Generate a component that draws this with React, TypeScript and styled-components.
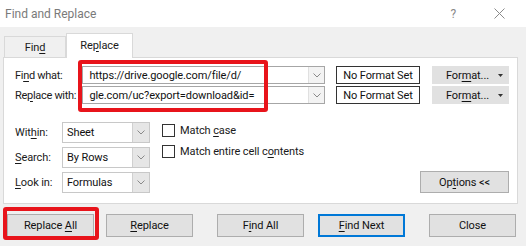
import styled, { createGlobalStyle } from "styled-components";

const GlobalStyle = createGlobalStyle`
  html, body {
    margin: 0;
    padding: 0;
    background: #f0f0f0;
  }
  body {
    font-family: Roboto, "Open Sans", sans-serif;
    font-size: 11px;
    letter-spacing: -0.1px;
    color: #1a1a1a;
  }
  * {
    box-sizing: border-box;
  }
`;

const Chevron = () => (
  <svg width="8" height="5" viewBox="0 0 8 5" fill="none">
    <path d="M0.5 0.5 L4 4 L7.5 0.5" stroke="#8a8a8a" strokeWidth="1" />
  </svg>
);

const CloseIcon = () => (
  <svg width="11" height="11" viewBox="0 0 11 11" fill="none">
    <path d="M0.5 0.5 L10.5 10.5 M10.5 0.5 L0.5 10.5" stroke="#8a8a8a" strokeWidth="1" />
  </svg>
);

const Caret = () => (
  <svg width="5" height="3" viewBox="0 0 5 3">
    <path d="M0 0 L5 0 L2.5 3 Z" fill="#333" />
  </svg>
);

const App = () => {
  return (
    <>
      <GlobalStyle />
      <Window>
        <TitleBar>
          <Title>Find and Replace</Title>
          <TitleActions>
            <Help>?</Help>
            <CloseIcon />
          </TitleActions>
        </TitleBar>

        <TabStrip>
          <Tab>
            <span>
              Fin<U>d</U>
            </span>
          </Tab>
          <Tab $active>
            <span>
              Re<U>p</U>lace
            </span>
          </Tab>
        </TabStrip>

        <Panel>
          <FieldRow>
            <FieldLabel>
              Fi<U>n</U>d what:
            </FieldLabel>
            <Combo>
              <ComboText>https://drive.google.com/file/d/</ComboText>
              <ComboArrow>
                <Chevron />
              </ComboArrow>
            </Combo>
            <FormatPreview>No Format Set</FormatPreview>
            <FormatButton>
              <span>
                For<U>m</U>at...
              </span>
              <Caret />
            </FormatButton>
          </FieldRow>
          <FieldRow>
            <FieldLabel>
              Re<U>p</U>lace with:
            </FieldLabel>
            <Combo>
              <ComboText>gle.com/uc?export=download&amp;id=</ComboText>
              <ComboArrow>
                <Chevron />
              </ComboArrow>
            </Combo>
            <FormatPreview>No Format Set</FormatPreview>
            <FormatButton>
              <span>
                For<U>m</U>at...
              </span>
              <Caret />
            </FormatButton>
          </FieldRow>

          <OptionsArea>
            <SelectGrid>
              <SmallLabel>
                Wit<U>h</U>in:
              </SmallLabel>
              <Select>
                <SelectText>Sheet</SelectText>
                <SelectArrow>
                  <Chevron />
                </SelectArrow>
              </Select>
              <SmallLabel>
                <U>S</U>earch:
              </SmallLabel>
              <Select>
                <SelectText>By Rows</SelectText>
                <SelectArrow>
                  <Chevron />
                </SelectArrow>
              </Select>
              <SmallLabel>
                <U>L</U>ook in:
              </SmallLabel>
              <Select>
                <SelectText>Formulas</SelectText>
                <SelectArrow>
                  <Chevron />
                </SelectArrow>
              </Select>
            </SelectGrid>

            <Checks>
              <CheckRow>
                <CheckBox />
                <span>
                  Match <U>c</U>ase
                </span>
              </CheckRow>
              <CheckRow>
                <CheckBox />
                <span>
                  Match entire cell c<U>o</U>ntents
                </span>
              </CheckRow>
            </Checks>

            <OptionsButton>
              <span>
                Op<U>t</U>ions &lt;&lt;
              </span>
            </OptionsButton>
          </OptionsArea>
        </Panel>

        <ButtonBar>
          <DialogButton $gap={0}>
            <span>
              Replace <U>A</U>ll
            </span>
          </DialogButton>
          <DialogButton $gap={12}>
            <span>
              <U>R</U>eplace
            </span>
          </DialogButton>
          <DialogButton $gap={24}>
            <span>
              F<U>i</U>nd All
            </span>
          </DialogButton>
          <DialogButton $gap={14} $default>
            <span>
              <U>F</U>ind Next
            </span>
          </DialogButton>
          <DialogButton $gap={24}>
            <span>Close</span>
          </DialogButton>
        </ButtonBar>

        <Highlight $x={78} $y={60} $w={190} $h={52} />
        <Highlight $x={3} $y={207} $w={96} $h={33} />
      </Window>
    </>
  );
};

const Window = styled.div`
  position: relative;
  width: 526px;
  height: 246px;
  overflow: hidden;
  background: #f0f0f0;
  display: flex;
  flex-direction: column;
`;

const TitleBar = styled.div`
  height: 27px;
  background: #fff;
  display: flex;
  align-items: center;
  padding-left: 5px;
  flex-shrink: 0;
`;

const Title = styled.div`
  color: #7a7a7a;
  font-size: 12px;
  letter-spacing: 0;
`;

const TitleActions = styled.div`
  margin-left: auto;
  margin-right: 21px;
  display: flex;
  align-items: center;
  gap: 38px;
`;

const Help = styled.span`
  color: #8a8a8a;
  font-size: 12px;
`;

const TabStrip = styled.div`
  height: 30px;
  display: flex;
  align-items: flex-end;
  padding-left: 4px;
  flex-shrink: 0;
`;

const Tab = styled.div<{ $active?: boolean }>`
  display: flex;
  align-items: center;
  justify-content: center;
  width: ${(p) => (p.$active ? "67px" : "62px")};
  height: ${(p) => (p.$active ? "25px" : "21px")};
  background: ${(p) => (p.$active ? "#fff" : "#f0f0f0")};
  border: 1px solid #d9d9d9;
  border-bottom: none;
  margin-bottom: ${(p) => (p.$active ? "-1px" : "0")};
  padding-bottom: ${(p) => (p.$active ? "2px" : "0")};
  position: relative;
  z-index: ${(p) => (p.$active ? 1 : 0)};
  color: #1a1a1a;
`;

const U = styled.span`
  text-decoration: underline;
  text-underline-offset: 2px;
`;

const Panel = styled.div`
  margin-left: 3px;
  width: 515px;
  height: 147px;
  background: #fff;
  border: 1px solid #d9d9d9;
  padding: 8px 8px 0 11px;
  display: flex;
  flex-direction: column;
  gap: 2px;
  flex-shrink: 0;
`;

const FieldRow = styled.div`
  display: flex;
  align-items: center;
  height: 18px;
`;

const FieldLabel = styled.div`
  width: 68px;
  white-space: nowrap;
  letter-spacing: -0.3px;
  color: #1a1a1a;
`;

const Combo = styled.div`
  width: 245px;
  height: 18px;
  display: flex;
  border: 1px solid #a6a6a6;
`;

const ComboText = styled.div`
  flex: 1;
  padding-left: 6px;
  display: flex;
  align-items: center;
  white-space: nowrap;
  overflow: hidden;
  color: #111;
`;

const ComboArrow = styled.div`
  width: 16px;
  display: flex;
  align-items: center;
  justify-content: center;
  background: #f3f3f3;
  border-left: 1px solid #e0e0e0;
`;

const FormatPreview = styled.div`
  margin-left: 11px;
  width: 84px;
  height: 18px;
  border: 1px solid #333;
  display: flex;
  align-items: center;
  justify-content: center;
  white-space: nowrap;
  color: #111;
`;

const FormatButton = styled.div`
  margin-left: 12px;
  width: 78px;
  height: 18px;
  background: #e1e1e1;
  border: 1px solid #e1e1e1;
  display: flex;
  align-items: center;
  justify-content: flex-end;
  gap: 9px;
  padding-right: 5px;
  white-space: nowrap;
  color: #111;
`;

const OptionsArea = styled.div`
  margin-top: 16px;
  display: flex;
  align-items: flex-start;
`;

const SelectGrid = styled.div`
  display: grid;
  grid-template-columns: 47px 88px;
  grid-auto-rows: 21px;
  row-gap: 4px;
  align-items: center;
`;

const SmallLabel = styled.div`
  white-space: nowrap;
  color: #1a1a1a;
`;

const Select = styled.div`
  height: 21px;
  display: flex;
  border: 1px solid #c8c8c8;
`;

const SelectText = styled.div`
  flex: 1;
  padding-left: 4px;
  display: flex;
  align-items: center;
  color: #111;
`;

const SelectArrow = styled.div`
  width: 17px;
  display: flex;
  align-items: center;
  justify-content: center;
  background: #e6e6e6;
  border-left: 1px solid #d0d0d0;
`;

const Checks = styled.div`
  margin-left: 12px;
  padding-top: 2px;
  display: flex;
  flex-direction: column;
  gap: 8px;
`;

const CheckRow = styled.div`
  display: flex;
  align-items: center;
  gap: 5px;
  height: 13px;
  white-space: nowrap;
  color: #1a1a1a;
`;

const CheckBox = styled.span`
  width: 13px;
  height: 13px;
  border: 1px solid #333;
  background: #fff;
  flex-shrink: 0;
`;

const OptionsButton = styled.div`
  margin-left: auto;
  margin-top: 49px;
  width: 89px;
  height: 22px;
  background: #e1e1e1;
  border: 1px solid #adadad;
  display: flex;
  align-items: center;
  justify-content: center;
  white-space: nowrap;
  color: #111;
`;

const ButtonBar = styled.div`
  margin-top: 10px;
  padding-left: 7px;
  display: flex;
`;

const DialogButton = styled.div<{ $gap: number; $default?: boolean }>`
  margin-left: ${(p) => p.$gap}px;
  width: 87px;
  height: 23px;
  background: #e1e1e1;
  border: 1px solid ${(p) => (p.$default ? "#0078d7" : "#adadad")};
  box-shadow: ${(p) => (p.$default ? "inset 0 0 0 1px #0078d7" : "none")};
  display: flex;
  align-items: center;
  justify-content: center;
  white-space: nowrap;
  color: #111;
`;

const Highlight = styled.div<{ $x: number; $y: number; $w: number; $h: number }>`
  position: absolute;
  left: ${(p) => p.$x}px;
  top: ${(p) => p.$y}px;
  width: ${(p) => p.$w}px;
  height: ${(p) => p.$h}px;
  border: 4px solid #e8141b;
  border-radius: 3px;
  pointer-events: none;
`;

export default App;
